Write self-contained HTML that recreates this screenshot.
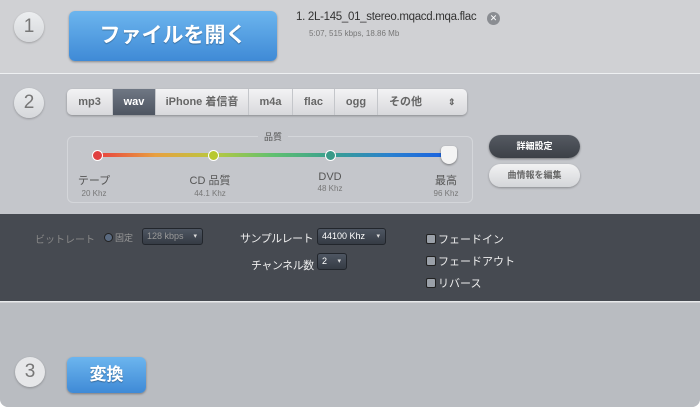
<!DOCTYPE html><html><head><meta charset="utf-8"><style>
*{margin:0;padding:0;box-sizing:border-box}
body{width:700px;height:407px;overflow:hidden;background:#fff;font-family:"Liberation Sans","Noto Sans CJK JP",sans-serif;position:relative}
.a{position:absolute}
.circ{position:absolute;width:30px;height:30px;border-radius:50%;background:linear-gradient(#eceef0,#d6d8db);box-shadow:0 1px 2px rgba(0,0,0,.25);color:#777;font-size:19px;text-align:center;line-height:30px}
.blue{background:linear-gradient(#6cb5ee,#3f8ad6);border-radius:6px;color:#fff;font-weight:bold;text-align:center;box-shadow:0 1px 2px rgba(0,0,0,.35);text-shadow:0 1px 1px rgba(0,0,0,.3)}
.tabs{display:flex;left:67px;top:89px;width:400px;height:26px;border-radius:5px;background:linear-gradient(#f3f3f4,#d8d9dc);box-shadow:0 1px 2px rgba(0,0,0,.3);overflow:hidden;font-size:11px;font-weight:bold;color:#666}
.tabs div{border-right:1px solid #c4c6ca;text-align:center;line-height:26px;flex:none}
.lbl{position:absolute;text-align:center;font-size:11px;color:#555;width:80px}
.lbl small{display:block;font-size:8px;color:#777;margin-top:1px}
.dot{position:absolute;width:11px;height:11px;border-radius:50%;border:1px solid #fff;top:150px}
.sel{position:absolute;height:17px;background:linear-gradient(#4e5662,#353b44);border:1px solid #22262c;border-radius:3px;color:#fff;font-size:9px;line-height:15px;padding-left:4px}
.sel:after{content:"▾";position:absolute;right:5px;font-size:7px;color:#ddd}
.cb{position:absolute;font-size:11px;color:#eee}
.cb:before{content:"";display:inline-block;width:8px;height:8px;background:#9aa0a8;border:1px solid #222;border-radius:2px;margin-right:2px;vertical-align:-1px}
</style></head><body>
<div class="a" style="left:0;top:0;width:700px;height:407px;border-radius:0 0 8px 8px;background:#d0d1d4;overflow:hidden">
<div class="a" style="left:0;top:73px;width:700px;height:141px;background:#c4c6cb;border-top:1px solid #eef0f2"></div>
<div class="a" style="left:0;top:214px;width:700px;height:88px;background:#464a51;border-bottom:1px solid #e8eaec"></div>
<div class="a" style="left:0;top:303px;width:700px;height:104px;background:#b9bcc1"></div>
</div>
<div class="circ" style="left:14px;top:12px">1</div>
<div class="a blue" style="left:69px;top:11px;width:208px;height:50px;font-size:21px;line-height:50px">ファイルを開く</div>
<div class="a" style="left:296px;top:11px;font-size:11.5px;letter-spacing:-0.3px;color:#333">1. 2L-145_01_stereo.mqacd.mqa.flac</div>
<div class="a" style="left:487px;top:12px;width:13px;height:13px;border-radius:50%;background:#8a8d92;color:#fff;font-size:9px;text-align:center;line-height:13px">✕</div>
<div class="a" style="left:309px;top:29px;font-size:8px;color:#777">5:07, 515 kbps, 18.86 Mb</div>
<div class="circ" style="left:14px;top:88px">2</div>
<div class="a tabs"><div style="width:46px">mp3</div><div style="width:43px;background:linear-gradient(#6f7784,#4e5561);color:#fff">wav</div><div style="width:93px">iPhone 着信音</div><div style="width:44px">m4a</div><div style="width:42px">flac</div><div style="width:43px">ogg</div><div style="width:89px;border:0;text-align:left;padding-left:11px;position:relative">その他<span style="position:absolute;left:70px;top:0;font-size:9px">⇕</span></div></div>
<div class="a" style="left:67px;top:136px;width:406px;height:67px;border:1px solid #d4d6da;border-radius:6px"></div>
<div class="a" style="left:258px;top:130px;font-size:9px;color:#555;background:#c4c6cb;padding:0 6px">品質</div>
<div class="a" style="left:97px;top:153px;width:352px;height:4px;border-radius:2px;background:linear-gradient(90deg,#e84040,#e8a040,#b8c840,#60c070,#3aa090,#2a80d0,#1a60e0)"></div>
<div class="dot" style="left:92px;background:#e04040"></div>
<div class="dot" style="left:208px;background:#b8c830"></div>
<div class="dot" style="left:325px;background:#3a9a88"></div>
<div class="a" style="left:441px;top:146px;width:16px;height:18px;background:#f4f4f4;border-radius:4px 4px 8px 8px;box-shadow:0 1px 2px rgba(0,0,0,.4)"></div>
<div class="lbl" style="left:54px;top:172px">テープ<small>20 Khz</small></div>
<div class="lbl" style="left:170px;top:172px">CD 品質<small>44.1 Khz</small></div>
<div class="lbl" style="left:290px;top:171px">DVD<small>48 Khz</small></div>
<div class="lbl" style="left:406px;top:172px">最高<small>96 Khz</small></div>
<div class="a" style="left:489px;top:135px;width:91px;height:23px;border-radius:12px;background:linear-gradient(#555a62,#3c4047);color:#fff;font-size:9px;font-weight:bold;text-align:center;line-height:23px;box-shadow:0 1px 2px rgba(0,0,0,.4)">詳細設定</div>
<div class="a" style="left:489px;top:164px;width:91px;height:23px;border-radius:12px;background:linear-gradient(#f2f2f3,#d4d6d9);color:#666;font-size:9px;font-weight:bold;text-align:center;line-height:23px;box-shadow:0 1px 2px rgba(0,0,0,.3)">曲情報を編集</div>
<div class="a" style="left:35px;top:231px;font-size:10px;color:#888">ビットレート</div>
<div class="a" style="left:104px;top:233px;width:9px;height:9px;border-radius:50%;background:#5a6a80;border:1px solid #222"></div>
<div class="a" style="left:115px;top:231px;font-size:9px;color:#999">固定</div>
<div class="sel" style="left:142px;top:228px;width:61px;color:#999">128 kbps</div>
<div class="a" style="left:240px;top:230px;font-size:11px;color:#eee;letter-spacing:-0.5px">サンプルレート</div>
<div class="sel" style="left:317px;top:228px;width:69px">44100 Khz</div>
<div class="a" style="left:251px;top:257px;font-size:11px;color:#eee;letter-spacing:-0.5px">チャンネル数</div>
<div class="sel" style="left:317px;top:253px;width:30px">2</div>
<div class="cb" style="left:426px;top:231px">フェードイン</div>
<div class="cb" style="left:426px;top:253px">フェードアウト</div>
<div class="cb" style="left:426px;top:275px">リバース</div>
<div class="circ" style="left:15px;top:357px;background:#e6e7e9">3</div>
<div class="a blue" style="left:67px;top:357px;width:79px;height:36px;font-size:17px;line-height:36px">変換</div>
</body></html>
